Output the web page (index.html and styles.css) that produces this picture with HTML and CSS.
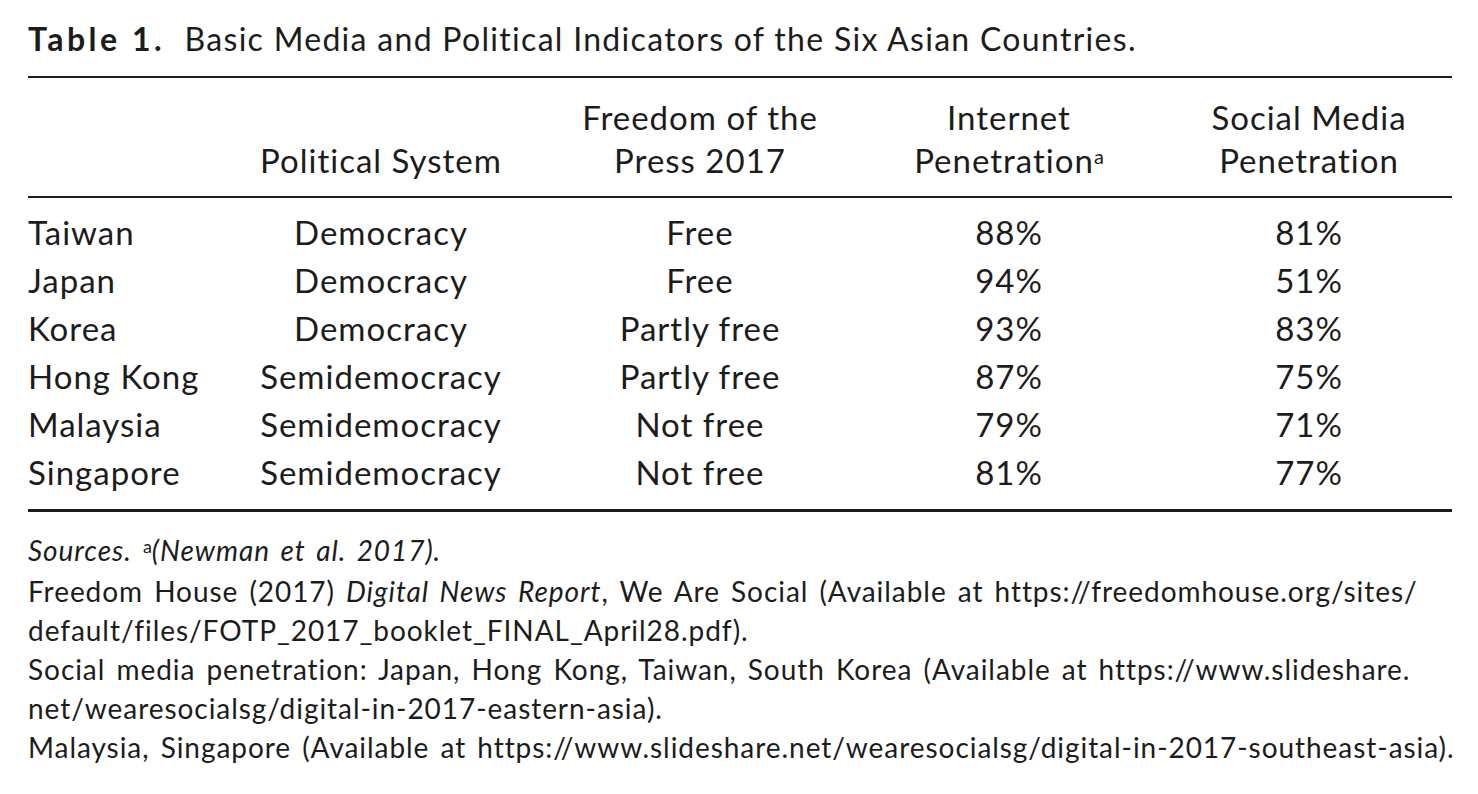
FILE: index.html
```html
<!DOCTYPE html>
<html lang="en">
<head>
<meta charset="utf-8">
<title>Table 1</title>
<link rel="stylesheet" href="styles.css">
</head>
<body>
<div class="page">
  <h1 class="title"><b>Table 1.</b> Basic Media and Political Indicators of the Six Asian Countries.</h1>
  <div class="table">
    <div class="head">
      <div class="c c1"></div>
      <div class="c c2"><br>Political System</div>
      <div class="c c3">Freedom of the<br>Press 2017</div>
      <div class="c c4">Internet<br>Penetration<sup>a</sup></div>
      <div class="c c5">Social Media<br>Penetration</div>
    </div>
    <div class="body">
      <div class="row"><div class="c c1">Taiwan</div><div class="c c2">Democracy</div><div class="c c3">Free</div><div class="c c4">88%</div><div class="c c5">81%</div></div>
      <div class="row"><div class="c c1">Japan</div><div class="c c2">Democracy</div><div class="c c3">Free</div><div class="c c4">94%</div><div class="c c5">51%</div></div>
      <div class="row"><div class="c c1">Korea</div><div class="c c2">Democracy</div><div class="c c3">Partly free</div><div class="c c4">93%</div><div class="c c5">83%</div></div>
      <div class="row"><div class="c c1">Hong Kong</div><div class="c c2">Semidemocracy</div><div class="c c3">Partly free</div><div class="c c4">87%</div><div class="c c5">75%</div></div>
      <div class="row"><div class="c c1">Malaysia</div><div class="c c2">Semidemocracy</div><div class="c c3">Not free</div><div class="c c4">79%</div><div class="c c5">71%</div></div>
      <div class="row"><div class="c c1">Singapore</div><div class="c c2">Semidemocracy</div><div class="c c3">Not free</div><div class="c c4">81%</div><div class="c c5">77%</div></div>
    </div>
  </div>
  <div class="notes">
    <p class="src"><i>Sources.</i> <sup>a</sup><i>(Newman et al. 2017).</i></p>
    <p>Freedom House (2017) <i>Digital News Report</i>, We Are Social (Available at https://freedomhouse.org/sites/<br>default/files/FOTP_2017_booklet_FINAL_April28.pdf).<br>Social media penetration: Japan, Hong Kong, Taiwan, South Korea (Available at https://www.slideshare.<br>net/wearesocialsg/digital-in-2017-eastern-asia).<br>Malaysia, Singapore (Available at https://www.slideshare.net/wearesocialsg/digital-in-2017-southeast-asia).</p>
  </div>
</div>
</body>
</html>
```

FILE: styles.css
```css
html, body {
  margin: 0;
  padding: 0;
  background: #ffffff;
}

body {
  font-family: Lato, "Open Sans", "DejaVu Sans", sans-serif;
  color: #1c1c1c;
}

.page {
  width: 1424px;
  padding: 19px 0 0 28px;
}

.title {
  margin: 0;
  font-size: 32px;
  line-height: 40px;
  font-weight: 400;
  letter-spacing: 1.3px;
  white-space: nowrap;
}

.title b {
  font-weight: 700;
  letter-spacing: 3.5px;
  margin-right: 10px;
}

.table {
  margin-top: 17px;
  border-top: 2px solid #1c1c1c;
  border-bottom: 3px solid #1c1c1c;
  font-size: 33px;
  letter-spacing: 1px;
}

.head {
  display: flex;
  padding: 18px 0 14px;
  line-height: 43px;
  border-bottom: 2px solid #1c1c1c;
}

.body {
  padding: 10px 0 13px;
}

.row {
  display: flex;
  line-height: 48px;
}

.c {
  white-space: nowrap;
  text-align: center;
}

.c1 { width: 212px; text-align: left; }
.c2 { width: 282px; }
.c3 { width: 356px; }
.c4 { width: 262px; }
.c5 { width: 286px; padding-left: 26px; }

.head sup {
  font-size: 20px;
  line-height: 0;
  vertical-align: 9px;
  letter-spacing: 0;
}

.notes {
  margin-top: 19px;
  font-size: 28px;
  line-height: 39px;
  letter-spacing: 0.95px;
  word-spacing: 3px;
}

.notes p {
  margin: 0;
  white-space: nowrap;
}

.notes .src {
  margin-bottom: 2px;
}

.notes sup {
  font-size: 18px;
  line-height: 0;
  vertical-align: 8px;
  letter-spacing: 0;
}
```
